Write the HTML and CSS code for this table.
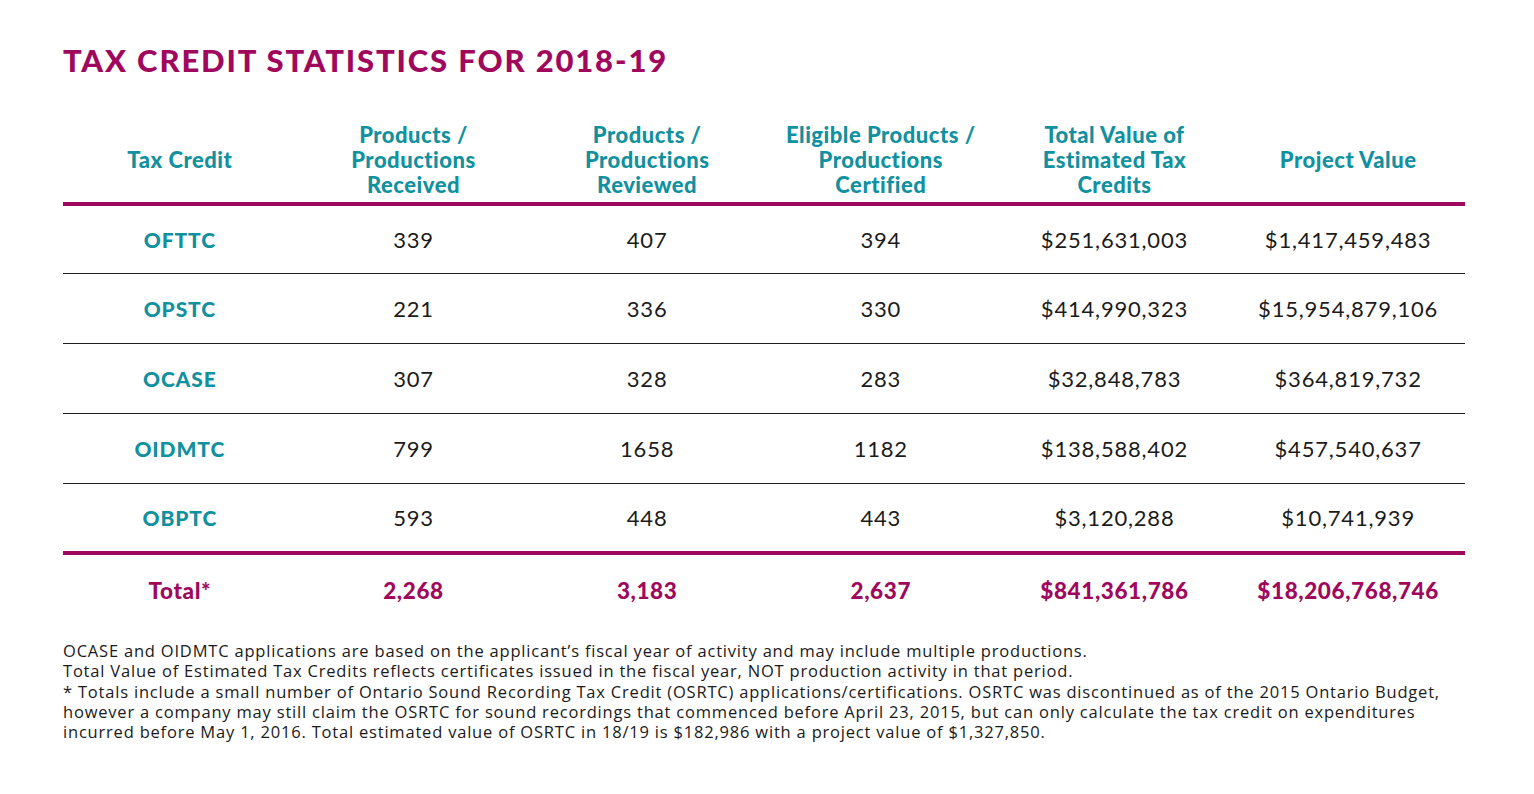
FILE: index.html
```html
<!DOCTYPE html>
<html lang="en">
<head>
<meta charset="utf-8">
<title>Tax Credit Statistics for 2018-19</title>
<link rel="stylesheet" href="styles.css">
</head>
<body>
<main class="page">
  <h1 class="title">TAX CREDIT STATISTICS FOR 2018-19</h1>
  <table class="stats">
    <thead>
      <tr>
        <th>Tax Credit</th>
        <th>Products /<br>Productions<br>Received</th>
        <th>Products /<br>Productions<br>Reviewed</th>
        <th>Eligible Products /<br>Productions<br>Certified</th>
        <th>Total Value of<br>Estimated Tax<br>Credits</th>
        <th>Project Value</th>
      </tr>
    </thead>
    <tbody>
      <tr><td class="name">OFTTC</td><td>339</td><td>407</td><td>394</td><td>$251,631,003</td><td>$1,417,459,483</td></tr>
      <tr><td class="name">OPSTC</td><td>221</td><td>336</td><td>330</td><td>$414,990,323</td><td>$15,954,879,106</td></tr>
      <tr><td class="name">OCASE</td><td>307</td><td>328</td><td>283</td><td>$32,848,783</td><td>$364,819,732</td></tr>
      <tr><td class="name">OIDMTC</td><td>799</td><td>1658</td><td>1182</td><td>$138,588,402</td><td>$457,540,637</td></tr>
      <tr><td class="name">OBPTC</td><td>593</td><td>448</td><td>443</td><td>$3,120,288</td><td>$10,741,939</td></tr>
    </tbody>
    <tfoot>
      <tr><td>Total*</td><td>2,268</td><td>3,183</td><td>2,637</td><td>$841,361,786</td><td>$18,206,768,746</td></tr>
    </tfoot>
  </table>
  <div class="notes">
    <p>OCASE and OIDMTC applications are based on the applicant’s fiscal year of activity and may include multiple productions.</p>
    <p>Total Value of Estimated Tax Credits reflects certificates issued in the fiscal year, NOT production activity in that period.</p>
    <p>* Totals include a small number of Ontario Sound Recording Tax Credit (OSRTC) applications/certifications. OSRTC was discontinued as of the 2015 Ontario Budget,<br>however a company may still claim the OSRTC for sound recordings that commenced before April 23, 2015, but can only calculate the tax credit on expenditures<br>incurred before May 1, 2016. Total estimated value of OSRTC in 18/19 is $182,986 with a project value of $1,327,850.</p>
  </div>
</main>
</body>
</html>
```

FILE: styles.css
```css
html, body {
  margin: 0;
  padding: 0;
  background: #ffffff;
}

.page {
  padding: 42px 69px 0 63px;
  font-family: Lato, "Open Sans", sans-serif;
}

.title {
  margin: 0;
  font-family: Lato, sans-serif;
  font-weight: 900;
  font-size: 31px;
  line-height: 36px;
  letter-spacing: 1.85px;
  color: #a0085e;
}

.stats {
  width: 100%;
  margin-top: 39px;
  border-collapse: collapse;
  table-layout: fixed;
}

.stats th {
  color: #11909f;
  font-weight: 900;
  font-size: 22px;
  line-height: 25px;
  letter-spacing: 0.5px;
  text-align: center;
  vertical-align: middle;
  padding: 0;
  height: 85px;
  border-bottom: 4px solid #a0085e;
}

.stats td {
  text-align: center;
  vertical-align: middle;
  font-size: 22px;
  letter-spacing: 0.8px;
  color: #1b1b1b;
  height: 69px;
  padding: 0;
}

.stats tbody tr:first-child td {
  height: 67px;
}

.stats tbody tr + tr td {
  border-top: 1px solid #1e1e1e;
}

.stats tbody tr:last-child td {
  height: 67px;
  border-bottom: 4px solid #a0085e;
}

.stats td.name {
  color: #11909f;
  font-weight: 900;
  font-size: 21px;
  letter-spacing: 0.9px;
}

.stats tfoot td {
  color: #a0085e;
  font-weight: 900;
  font-size: 22.5px;
  height: 71px;
  letter-spacing: 0.6px;
}

.notes {
  margin-top: 15px;
  font-family: "Open Sans", sans-serif;
  font-size: 16.5px;
  line-height: 20.3px;
  letter-spacing: 0.8px;
  color: #1a1a1a;
  white-space: nowrap;
}

.notes p {
  margin: 0;
}
```
